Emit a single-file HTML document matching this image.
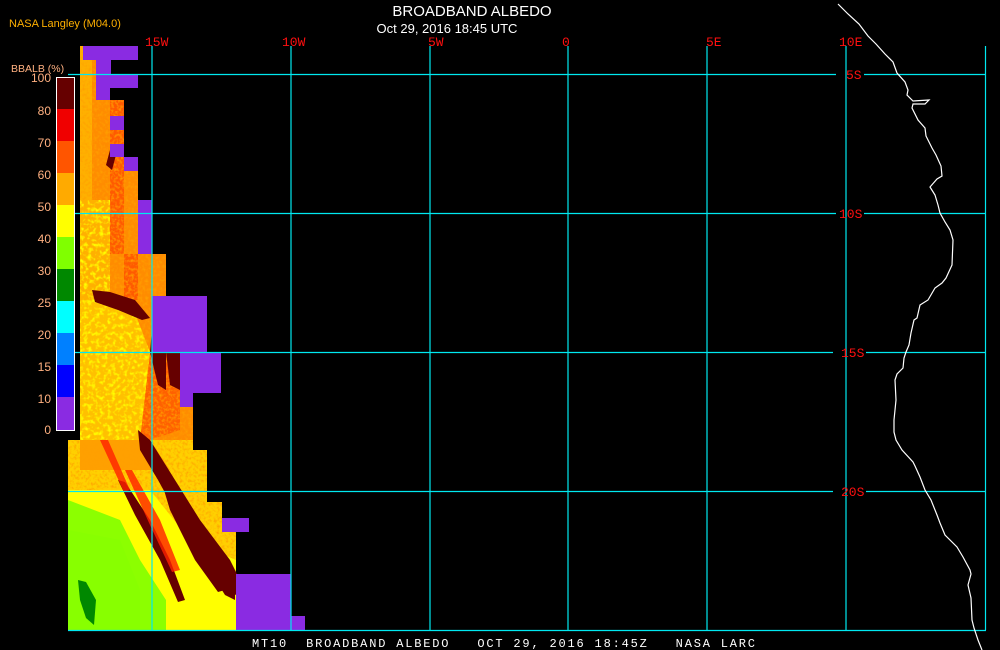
<!DOCTYPE html>
<html><head><meta charset="utf-8"><style>
html,body{margin:0;padding:0;background:#000;width:1000px;height:650px;overflow:hidden}
svg{display:block}
text{font-family:"Liberation Sans",sans-serif}
.m{font-family:"Liberation Mono",monospace}
</style></head><body>
<svg width="1000" height="650" viewBox="0 0 1000 650" xmlns="http://www.w3.org/2000/svg">
<defs>
<filter id="n" x="0" y="0" width="100%" height="100%">
<feTurbulence type="fractalNoise" baseFrequency="0.35" numOctaves="2" seed="3" result="t"/>
<feColorMatrix in="t" type="matrix" values="0 0 0 0 1  0 0 0 0 0.35  0 0 0 0 0  0 0 0 -2.2 1.25" result="c"/>
<feComposite in="c" in2="SourceGraphic" operator="in" result="cc"/>
<feMerge><feMergeNode in="SourceGraphic"/><feMergeNode in="cc"/></feMerge>
</filter>
<filter id="y" x="0" y="0" width="100%" height="100%">
<feTurbulence type="fractalNoise" baseFrequency="0.25" numOctaves="2" seed="7" result="t"/>
<feColorMatrix in="t" type="matrix" values="0 0 0 0 1  0 0 0 0 1  0 0 0 0 0  0 0 0 -3 1.6" result="c"/>
<feComposite in="c" in2="SourceGraphic" operator="in" result="cc"/>
<feMerge><feMergeNode in="SourceGraphic"/><feMergeNode in="cc"/></feMerge>
</filter>
</defs>
<rect width="1000" height="650" fill="#000"/>

<!-- data -->
<g filter="url(#n)">
<polygon fill="#ff8c00" points="80,46 96,46 96,60 110,60 110,100 124,100 124,170 138,170 138,200 152,200 152,254 166,254 166,296 152,296 152,352 180,352 180,407 193,407 193,440 80,440"/>
<polygon fill="#ffb000" points="80,46 92,46 92,200 110,200 110,300 80,300"/>
<polygon fill="#ff5a00" points="110,100 124,100 124,300 138,300 138,200 152,200 152,254 110,254"/>
<polygon fill="#ff6000" points="120,352 180,352 180,430 150,440 120,440"/>
<polygon fill="#ffd000" points="68,440 193,440 193,450 207,450 207,502 222,502 222,532 236,532 236,574 236,630 68,630"/>
<polygon fill="#ffa000" points="80,440 150,440 170,470 120,470 80,470"/>
</g>
<g filter="url(#y)">
<polygon fill="#ffc000" points="80,300 130,300 150,352 140,440 80,440"/>
<polygon fill="#ffb000" points="80,200 110,200 110,300 80,300"/>
<polygon fill="#ffff00" points="68,490 150,490 190,540 236,560 236,630 68,630"/>
</g>
<polygon fill="#80ff00" points="68,500 120,520 140,560 166,600 166,630 68,630" opacity="0.9"/>
<polygon fill="#88ff00" points="68,530 120,540 140,590 140,630 68,630"/>
<polygon fill="#008800" points="78,580 86,582 96,600 94,625 86,618 80,600"/>
<!-- dark ridges -->
<g fill="#660000">
<polygon points="92,290 110,292 135,300 150,318 142,320 118,310 95,302"/>
<polygon points="152,330 166,332 166,390 158,385 150,352"/>
<polygon points="166,352 180,352 180,390 170,385"/>
<polygon points="138,430 150,440 175,480 200,520 230,560 245,590 235,595 210,565 180,520 158,480 140,450"/>
<polygon points="155,460 165,465 190,520 215,560 225,590 218,592 195,560 170,510"/>
<polygon points="118,480 125,482 150,520 170,560 185,600 178,602 160,560 135,515"/>
<polygon points="175,500 183,500 205,540 235,580 235,600 225,595 200,555"/>
<polygon points="110,150 116,155 112,170 106,165"/>
</g>
<g fill="#ff2000" opacity="0.8">
<polygon points="125,470 132,470 160,520 180,570 172,572 150,525"/>
<polygon points="100,440 108,440 130,490 124,492"/>
</g>

<!-- purple blocks -->
<g fill="#8a2be2">
<rect x="83" y="46" width="55" height="14"/>
<rect x="96" y="60" width="15" height="15"/>
<rect x="96" y="75" width="42" height="13"/>
<rect x="96" y="88" width="14" height="12"/>
<rect x="110" y="116" width="14" height="14"/>
<rect x="110" y="144" width="14" height="13"/>
<rect x="124" y="157" width="14" height="14"/>
<rect x="138" y="200" width="14" height="54"/>
<rect x="152" y="296" width="55" height="56"/>
<rect x="180" y="353" width="41" height="40"/>
<rect x="180" y="393" width="13" height="14"/>
<rect x="222" y="518" width="27" height="14"/>
<rect x="236" y="574" width="55" height="56"/>
<rect x="291" y="616" width="14" height="14"/>
</g>

<!-- grid -->
<g stroke="#00e8f0" stroke-width="1.2" fill="none">
<line x1="152" y1="46" x2="152" y2="630"/>
<line x1="291" y1="46" x2="291" y2="630"/>
<line x1="430" y1="46" x2="430" y2="630"/>
<line x1="568" y1="46" x2="568" y2="630"/>
<line x1="707" y1="46" x2="707" y2="630"/>
<line x1="846" y1="46" x2="846" y2="630"/>
<line x1="985.5" y1="46" x2="985.5" y2="630"/>
<line x1="68" y1="74.5" x2="836" y2="74.5"/><line x1="864" y1="74.5" x2="986" y2="74.5"/>
<line x1="68" y1="213.5" x2="836" y2="213.5"/><line x1="864" y1="213.5" x2="986" y2="213.5"/>
<line x1="68" y1="352.5" x2="833" y2="352.5"/><line x1="866" y1="352.5" x2="986" y2="352.5"/>
<line x1="68" y1="491.5" x2="833" y2="491.5"/><line x1="866" y1="491.5" x2="986" y2="491.5"/>
<line x1="68" y1="630.5" x2="986" y2="630.5"/>
</g>

<!-- coastline -->
<polyline fill="none" stroke="#fff" stroke-width="1.2" points="838,4 848,14 859,24 868,36 876,44 885,54 893,62 897,73 905,82 908,90 907,95 913,101 929,100 925,104 913,104 912,108 918,120 925,128 926,136 932,148 936,155 941,166 942,176 937,179 930,187 935,195 938,205 940,213 945,222 950,230 953,240 952,265 946,278 942,283 935,288 928,300 920,305 917,318 914,320 911,333 909,345 906,352 904,358 903,368 897,374 895,380 896,400 894,420 894,432 896,440 902,450 913,462 915,466 920,477 925,490 931,500 937,515 940,523 945,535 957,547 963,557 970,570 971,574 968,585 971,598 972,620 974,628 978,640 982,650"/>

<!-- axis labels -->
<g fill="#ff1010" font-size="13">
<text x="145" y="46" class="m">15W</text>
<text x="282" y="46" class="m">10W</text>
<text x="428" y="46" class="m">5W</text>
<text x="562" y="46" class="m">0</text>
<text x="706" y="46" class="m">5E</text>
<text x="839" y="46" class="m">10E</text>
<text x="846" y="79" class="m">5S</text>
<text x="839" y="218" class="m">10S</text>
<text x="841" y="357" class="m">15S</text>
<text x="841" y="496" class="m">20S</text>
</g>

<!-- titles -->
<text x="472" y="16" fill="#fff" font-size="15" text-anchor="middle">BROADBAND ALBEDO</text>
<text x="447" y="33" fill="#fff" font-size="13" text-anchor="middle">Oct 29, 2016 18:45 UTC</text>
<text x="9" y="27" fill="#ffb000" font-size="11">NASA Langley (M04.0)</text>
<text x="11" y="72" fill="#ffb080" font-size="10.5">BBALB (%)</text>

<!-- colorbar -->
<g>
<rect x="57" y="77" width="17" height="32" fill="#660000"/>
<rect x="57" y="109" width="17" height="32" fill="#f00000"/>
<rect x="57" y="141" width="17" height="32" fill="#ff5500"/>
<rect x="57" y="173" width="17" height="32" fill="#ffaa00"/>
<rect x="57" y="205" width="17" height="32" fill="#ffff00"/>
<rect x="57" y="237" width="17" height="32" fill="#80ff00"/>
<rect x="57" y="269" width="17" height="32" fill="#008800"/>
<rect x="57" y="301" width="17" height="32" fill="#00ffff"/>
<rect x="57" y="333" width="17" height="32" fill="#0080ff"/>
<rect x="57" y="365" width="17" height="32" fill="#0000ff"/>
<rect x="57" y="397" width="17" height="33" fill="#8a2be2"/>
<rect x="56.5" y="77.5" width="18" height="353" fill="none" stroke="#fff" stroke-width="1"/>
</g>
<g fill="#ffb080" font-size="12" text-anchor="end">
<text x="51" y="82">100</text>
<text x="51" y="115">80</text>
<text x="51" y="147">70</text>
<text x="51" y="179">60</text>
<text x="51" y="211">50</text>
<text x="51" y="243">40</text>
<text x="51" y="275">30</text>
<text x="51" y="307">25</text>
<text x="51" y="339">20</text>
<text x="51" y="371">15</text>
<text x="51" y="403">10</text>
<text x="51" y="434">0</text>
</g>

<text x="252" y="647" fill="#fff" font-size="12" class="m" textLength="503" lengthAdjust="spacing" xml:space="preserve">MT10  BROADBAND ALBEDO   OCT 29, 2016 18:45Z   NASA LARC</text>
</svg>
</body></html>
